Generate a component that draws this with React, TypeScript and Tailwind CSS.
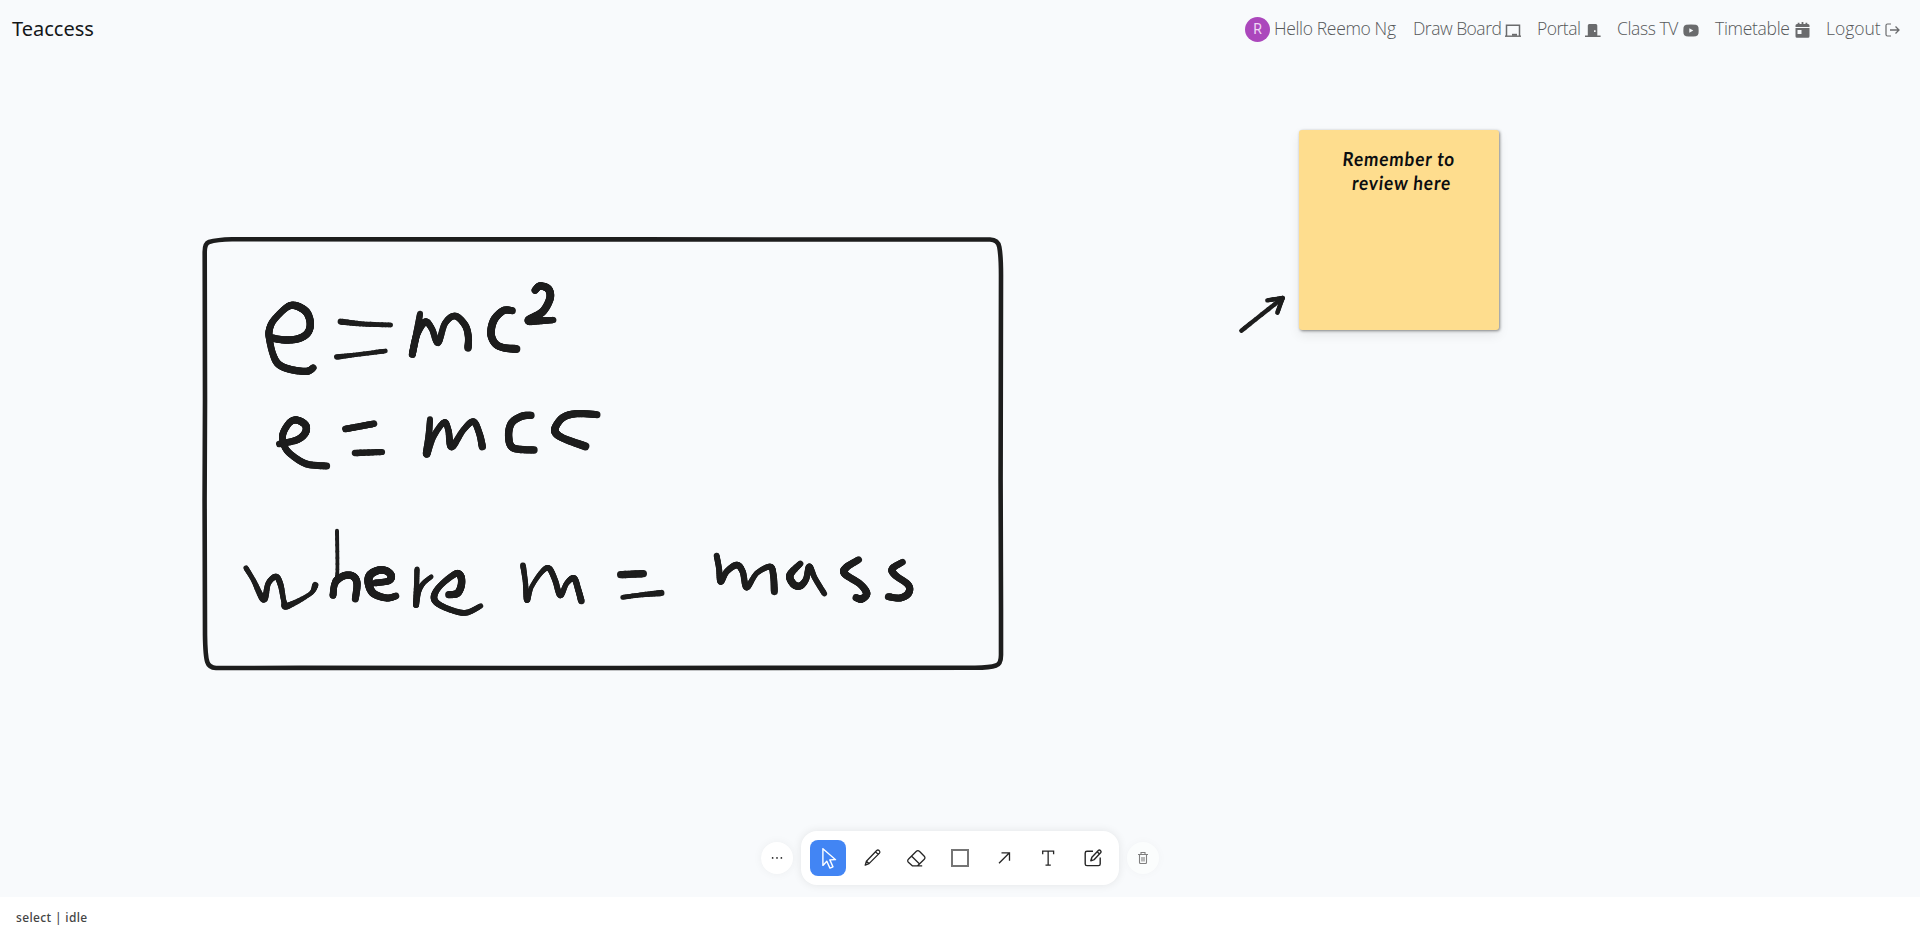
import React from "react";
import { RxCursorArrow } from "react-icons/rx";
import { AiOutlineEllipsis } from "react-icons/ai";

// A pen sample: x, y and pen width.
type Sample = [number, number, number];
type Stroke = Sample[];

const upperInk: Stroke[] = [
  [[245, 354, 20], [285, 360, 20], [325, 356, 20], [352, 340, 20], [361, 312, 20], [352, 280, 21], [330, 262, 21], [306, 256, 20], [285, 266, 18], [250, 302, 18], [238, 330, 19], [238, 355, 19], [248, 400, 18], [265, 432, 20], [300, 448, 20], [350, 454, 20], [370, 443, 18]],
  [[452, 305, 17], [520, 312, 14], [602, 315, 13]],
  [[440, 411, 15], [500, 404, 12], [586, 393, 13]],
  [[690, 281, 16], [680, 340, 19], [667, 403, 19], [680, 345, 19], [705, 306, 19], [725, 325, 17], [744, 368, 18], [765, 310, 17], [795, 288, 18], [825, 315, 19], [835, 350, 19], [834, 384, 20]],
  [[967, 272, 19], [940, 272, 20], [912, 300, 21], [903, 340, 21], [915, 370, 20], [940, 383, 20], [979, 387, 22]],
  [[1035, 211, 19], [1050, 198, 20], [1075, 207, 21], [1080, 235, 21], [1058, 275, 21], [1016, 301, 23], [1050, 302, 20], [1090, 300, 17]],
  [[268, 672, 18], [320, 660, 19], [345, 640, 20], [348, 618, 20], [332, 604, 20], [313, 600, 19], [295, 612, 18], [278, 645, 19], [284, 680, 18], [305, 705, 18], [350, 732, 19], [410, 738, 19]],
  [[466, 627, 18], [510, 619, 18], [552, 611, 18]],
  [[495, 699, 18], [576, 696, 17]],
  [[720, 598, 16], [716, 650, 18], [710, 702, 20], [730, 650, 17], [762, 607, 16], [775, 630, 17], [785, 680, 20], [820, 630, 16], [850, 605, 18], [868, 640, 18], [877, 680, 20]],
  [[1023, 586, 20], [995, 589, 20], [964, 610, 20], [956, 650, 20], [970, 684, 20], [1032, 690, 20]],
  [[1221, 584, 19], [1160, 581, 20], [1120, 592, 20], [1097, 620, 20], [1098, 640, 21], [1125, 657, 20], [1186, 679, 22]],
];

const lowerLeftInk: Stroke[] = [
  [[78, 204, 14], [100, 240, 13], [131, 298, 18], [145, 250, 15], [168, 230, 16], [182, 255, 16], [192, 305, 14], [202, 318, 18], [270, 282, 11], [286, 255, 17]],
  [[351, 92, 11], [352, 220, 10], [345, 245, 15], [339, 286, 18], [345, 250, 18], [370, 228, 20], [398, 228, 20], [411, 250, 20], [406, 297, 19]],
  [[465, 249, 18], [505, 243, 18], [514, 228, 20], [500, 213, 20], [475, 211, 21], [450, 225, 22], [446, 250, 22], [460, 280, 21], [500, 294, 19], [528, 288, 18]],
  [[591, 207, 14], [590, 250, 14], [588, 315, 16], [596, 275, 14], [610, 250, 13], [634, 230, 12]],
  [[686, 284, 19], [712, 280, 20], [724, 255, 20], [722, 228, 20], [705, 222, 18], [660, 258, 16], [642, 290, 18], [655, 312, 17], [700, 332, 16], [740, 338, 16], [782, 318, 14]],
  [[909, 196, 16], [916, 245, 14], [921, 300, 16], [935, 260, 12], [965, 216, 13], [987, 205, 16], [1005, 240, 16], [1021, 286, 16], [1040, 250, 14], [1062, 235, 17], [1075, 270, 17], [1084, 303, 18]],
];

const lowerRightInk: Stroke[] = [
  [[122, 224, 20], [190, 221, 20]],
  [[128, 292, 13], [180, 285, 13], [244, 279, 17]],
  [[410, 167, 16], [417, 205, 16], [422, 245, 17], [440, 215, 16], [470, 195, 18], [488, 215, 17], [500, 262, 17], [530, 220, 14], [570, 200, 16], [580, 225, 18], [583, 275, 19]],
  [[661, 191, 16], [630, 225, 20], [640, 252, 20], [660, 258, 19], [678, 238, 17], [688, 200, 17], [705, 235, 15], [733, 281, 15]],
  [[836, 179, 18], [798, 203, 20], [795, 222, 20], [840, 252, 19], [860, 280, 20], [845, 297, 20], [828, 293, 19]],
  [[968, 186, 17], [937, 206, 19], [945, 225, 19], [985, 255, 19], [985, 280, 20], [960, 294, 19], [925, 290, 19]],
];

const arrowInk: Stroke[] = [
  [[64, 662, 12], [188, 564, 12]],
  [[142, 571, 12], [188, 564, 12]],
  [[188, 564, 12], [172, 608, 12]],
];

const STEPS = 8;

const spline = (a: number, b: number, c: number, d: number, t: number) =>
  0.5 * (2 * b + (c - a) * t + (2 * a - 5 * b + 4 * c - d) * t * t + (3 * b - a - 3 * c + d) * t * t * t);

function smooth(stroke: Stroke): Stroke {
  const out: Stroke = [stroke[0]];
  for (let i = 0; i < stroke.length - 1; i++) {
    const p0 = stroke[Math.max(0, i - 1)];
    const p1 = stroke[i];
    const p2 = stroke[i + 1];
    const p3 = stroke[Math.min(stroke.length - 1, i + 2)];
    for (let s = 1; s <= STEPS; s++) {
      const t = s / STEPS;
      out.push([
        spline(p0[0], p1[0], p2[0], p3[0], t),
        spline(p0[1], p1[1], p2[1], p3[1], t),
        p1[2] + (p2[2] - p1[2]) * t,
      ]);
    }
  }
  return out;
}

function Ink({ strokes, x, y }: { strokes: Stroke[]; x: number; y: number }) {
  return (
    <g transform={`translate(${x} ${y}) scale(0.33333)`} stroke="#1d1d1d" strokeLinecap="round">
      {strokes.map((stroke, i) => {
        const pts = smooth(stroke);
        return pts.slice(1).map((p, j) => (
          <line key={`${i}-${j}`} x1={pts[j][0]} y1={pts[j][1]} x2={p[0]} y2={p[1]} strokeWidth={p[2] * 1.1} />
        ));
      })}
    </g>
  );
}

function Drawing() {
  return (
    <svg className="absolute inset-0 h-full w-full" viewBox="0 0 1920 897" fill="none">
      <path
        d="M205 400 L204.700 252 Q204.700 243.500 209 242 Q217 239.700 232 239.300 L640 239.400 L990 239.500 Q998 239.700 999.300 247 Q1001 256 1001 275 L1000.600 480 L1001 610 L1001 655 Q1001 664 996 665.500 Q990 667.600 975 667.800 L620 668 L300 667.900 L216 668 Q209 667.500 207.300 662 Q205.300 656 205 635 L204.600 500 Z"
        stroke="#1d1d1d"
        strokeWidth="4.600"
        strokeLinejoin="round"
      />
      <Ink strokes={upperInk} x={190} y={220} />
      <Ink strokes={lowerLeftInk} x={220} y={500} />
      <Ink strokes={lowerRightInk} x={580} y={500} />
      <Ink strokes={arrowInk} x={1220} y={110} />
    </svg>
  );
}

const BoardIcon = () => (
  <svg width="16" height="13" viewBox="0 0 16 13" fill="none" stroke="currentColor">
    <path d="M1.500 12V1.200h13V12" strokeWidth="1.500" />
    <path d="M0 12.200h16" strokeWidth="1.400" />
    <path d="M7 9.800h5v2H7z" fill="currentColor" stroke="none" />
  </svg>
);

const DoorIcon = () => (
  <svg width="16" height="13" viewBox="0 0 16 13" fill="currentColor">
    <path
      fillRule="evenodd"
      d="M2.800 11.500V1.500Q2.800 0 4.300 0h6.500Q12.300 0 12.300 1.500v10H15.600V13H0V11.500ZM9 6.200v1.800h1.600V6.200z"
    />
  </svg>
);

const VideoIcon = () => (
  <svg width="16" height="13" viewBox="0 0 16 13">
    <path
      fill="currentColor"
      fillRule="evenodd"
      d="M3 .8Q8 0 13 .8Q15.2 1.2 15.5 3.5Q15.8 6.500 15.500 9.500Q15.200 11.800 13 12.200Q8 13 3 12.200Q.8 11.800 .5 9.500Q.2 6.500 .5 3.500Q.8 1.200 3 .8ZM6.300 4.200v4.600L10.300 6.500Z"
    />
  </svg>
);

const CalendarIcon = () => (
  <svg width="15" height="16" viewBox="0 0 15 16" fill="currentColor">
    <path d="M2.700 .8h1.800V2h2.100V0h1.800V2h2.100V.8h1.800V2H13a1.500 1.500 0 0 1 1.500 1.500V5H.5V3.500A1.500 1.500 0 0 1 2 2h.7z" />
    <path fillRule="evenodd" d="M.5 6h14v8.200A1.500 1.500 0 0 1 13 15.700H2a1.500 1.500 0 0 1-1.500-1.500zM2.500 8v4h4V8z" />
  </svg>
);

const LogoutIcon = () => (
  <svg width="15" height="14" viewBox="0 0 15 14" fill="none" stroke="currentColor">
    <path d="M6 1H2.500Q1 1 1 2.500v9Q1 13 2.500 13H6" strokeWidth="1.200" />
    <path d="M5 7h9M10.500 3.500L14 7l-3.500 3.500" strokeWidth="1.300" />
  </svg>
);

const toolIcon = {
  width: 20,
  height: 20,
  viewBox: "0 0 20 20",
  fill: "none",
  stroke: "currentColor",
  strokeWidth: 1.3,
  strokeLinejoin: "round",
} as const;

const PencilIcon = () => (
  <svg {...toolIcon}>
    <path d="M3.200 17.200L4.400 13.200L14.700 2.500Q15.800 1.500 17.200 2.600Q18.500 3.900 17.500 5.100L7 15.600ZM13.500 3.700l2.700 2.700M4.400 13.200L7 15.600" />
  </svg>
);

const EraserIcon = () => (
  <svg width="21" height="21" viewBox="0 0 24 24" fill="none" stroke="currentColor" strokeWidth="1.500" strokeLinejoin="round">
    <path d="M18.500 20.500H7.500l-4.800-4.300c-1-1-1-2.500 0-3.400l9.200-9c1-1 2.500-1 3.400 0l5.600 5.600c1 1 1 2.500 0 3.400L13 20.500M6.500 9.500l9 8.800" />
  </svg>
);

const ArrowIcon = () => (
  <svg {...toolIcon} strokeLinejoin="miter">
    <path d="M5 15.300L15.200 5M7.500 4.800h8v8" />
  </svg>
);

const TextIcon = () => (
  <svg {...toolIcon} strokeLinejoin="miter">
    <path d="M4.700 6.200V3.200h10.900V6.200M10.150 3.200V17M7.500 17.200h5.300" />
  </svg>
);

const EditIcon = () => (
  <svg {...toolIcon} strokeWidth="1.400">
    <path d="M11 3.300H5Q3.200 3.300 3.200 5v10.900Q3.200 17.600 5 17.600h11.500Q18.200 17.600 18.200 15.900V9.500" />
    <path d="M8.800 12.800L9.900 9.200L16.300 2.500Q17.300 1.600 18.500 2.600Q19.500 3.700 18.600 4.800L12.300 11.600ZM15.200 3.700l2.300 2.300" />
  </svg>
);

const TrashIcon = () => (
  <svg width="10" height="12" viewBox="0 0 10 12" fill="none" stroke="currentColor" strokeWidth="1.100">
    <path d="M0 2.500h10M3 2.500v-2h4v2M1.500 2.500v8q0 1 1 1h5q1 0 1-1v-8M4 5v4.500M6 5v4.500" />
  </svg>
);

function NavItem({ label, text, children }: { label: string; text: string; children?: React.ReactNode }) {
  return (
    <a className="flex h-6 items-center whitespace-nowrap">
      <span className={text}>{label}</span>
      <span className="mt-1 flex text-[#6a6b6d]">{children}</span>
    </a>
  );
}

function Header() {
  return (
    <header className="relative flex h-14 items-center justify-between pr-5 pl-3">
      <span className="mt-0.5 font-['Noto_Sans'] text-[20px] text-[#141618]">Teaccess</span>
      <nav className="flex items-center gap-4 font-['Open_Sans'] text-[17.5px] font-light text-[#56585a]">
        <div className="flex h-6 items-center">
          <span className="mt-[3px] mr-1 flex size-[25px] items-center justify-center rounded-full bg-[#ab47bc] font-['Roboto'] text-[14px] font-normal text-[#f0d8f4]">
            R
          </span>
          <span className="w-[123px] tracking-[-0.35px] whitespace-nowrap">Hello Reemo Ng</span>
        </div>
        <NavItem label="Draw Board" text="w-[92px] tracking-[-0.5px]"><BoardIcon /></NavItem>
        <NavItem label="Portal" text="w-[48px] tracking-[-0.5px]"><DoorIcon /></NavItem>
        <NavItem label="Class TV" text="w-[66px] tracking-[-0.4px]"><VideoIcon /></NavItem>
        <NavItem label="Timetable" text="w-[80px] tracking-[-0.3px]"><CalendarIcon /></NavItem>
        <NavItem label="Logout" text="w-[59px] tracking-[-0.05px]"><LogoutIcon /></NavItem>
      </nav>
    </header>
  );
}

function StickyNote() {
  return (
    <div className="absolute top-[130px] left-[1299px] h-[200px] w-[200px] rounded-[3px] bg-[#fedd8e] pt-[17px] text-center font-['Lato'] text-[19.5px] leading-6 font-bold tracking-[1px] text-[#0b0d10] shadow-[1px_1px_3px_rgba(0,0,0,0.45),0_5px_12px_rgba(0,0,0,0.08)]">
      <div className="scale-x-[0.88] -skew-x-6 whitespace-pre">Remember to</div>
      <div className="scale-x-[0.88] -skew-x-6 pl-1.5 whitespace-pre">review here</div>
    </div>
  );
}

function Tool({ children, active = false }: { children: React.ReactNode; active?: boolean }) {
  return (
    <button
      className={`flex size-9 items-center justify-center rounded-lg ${active ? "bg-[#4285f4] text-white" : "text-[#262626]"}`}
    >
      {children}
    </button>
  );
}

function Toolbar() {
  return (
    <div className="relative flex items-center justify-center gap-2 pb-3">
      <button className="flex size-8 items-center justify-center rounded-full bg-white text-[#262626] shadow-[0_0_10px_rgba(0,0,0,0.05)]">
        <AiOutlineEllipsis size={16} />
      </button>
      <div className="flex h-[54px] items-center gap-2 rounded-2xl bg-white px-[9px] shadow-[0_0_10px_rgba(0,0,0,0.09)]">
        <Tool active><RxCursorArrow size={21} /></Tool>
        <Tool><PencilIcon /></Tool>
        <Tool><EraserIcon /></Tool>
        <Tool><span className="size-[18px] border-2 border-[#757575]" /></Tool>
        <Tool><ArrowIcon /></Tool>
        <Tool><TextIcon /></Tool>
        <Tool><EditIcon /></Tool>
      </div>
      <button className="flex size-8 items-center justify-center rounded-full bg-[#fbfdfd] text-[#808080] shadow-[0_0_10px_rgba(0,0,0,0.03)]">
        <TrashIcon />
      </button>
    </div>
  );
}

export default function App() {
  return (
    <div className="flex h-[937px] w-[1920px] flex-col overflow-hidden bg-white">
      <main className="relative flex h-[897px] flex-col justify-between bg-[#f8fafc]">
        <Drawing />
        <Header />
        <StickyNote />
        <Toolbar />
      </main>
      <footer className="flex h-10 items-center px-4 pt-0.5 font-['Noto_Sans'] text-[12px] font-medium tracking-[0.35px] text-[#444]">
        select | idle
      </footer>
    </div>
  );
}
